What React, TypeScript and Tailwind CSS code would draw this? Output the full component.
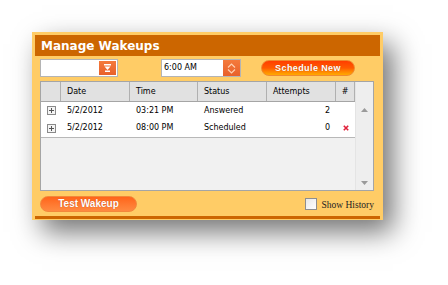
import React from "react";

const cols = "grid grid-cols-[20px_69px_68px_69px_69px_19px]";

const rows = [
  { date: "5/2/2012", time: "03:21 PM", status: "Answered", attempts: 2, del: false },
  { date: "5/2/2012", time: "08:00 PM", status: "Scheduled", attempts: 0, del: true },
];

const PlusBox = () => (
  <svg width="9" height="9" viewBox="0 0 9 9">
    <rect x="0.5" y="0.5" width="8" height="8" fill="#f4f4f4" stroke="#8a8a8a" />
    <path d="M2 4.5h5M4.5 2v5" stroke="#555" strokeWidth="1" />
  </svg>
);

const App: React.FC = () => {
  return (
    <div className="w-[448px] h-[285px] bg-white pt-[32px] pl-[32px] font-['DejaVu_Sans',sans-serif]">
      <div className="w-[351px] h-[188px] bg-[#ffcc66] px-[3px] pt-[3px] shadow-[10px_12px_26px_rgba(0,0,0,0.55)] flex flex-col">
        <div className="h-[21px] bg-[#cc6600] pl-[6px] flex items-center text-white font-bold text-[12px] leading-none">
          Manage Wakeups
        </div>

        <div className="px-[5px] flex flex-col">
          <div className="mt-[3px] h-[18px] flex items-center">
            <div className="w-[78px] h-[18px] bg-white border border-[#b4b4b4] flex items-center justify-end pr-[1px]">
              <div className="w-[17px] h-[14px] bg-gradient-to-b from-[#f47a3c] to-[#e8602a] flex items-center justify-center">
                <svg width="9" height="8" viewBox="0 0 9 8">
                  <rect x="1" y="0" width="7" height="1.5" fill="#fff" />
                  <path d="M1.5 2.5h6L4.5 6z" fill="#fff" />
                  <rect x="2" y="6.5" width="5" height="1.5" fill="#fff" />
                </svg>
              </div>
            </div>

            <div className="ml-[43px] w-[80px] h-[18px] bg-white border border-[#b4b4b4] flex items-center">
              <span className="pl-[2px] text-[8px] text-black flex-1">6:00 AM</span>
              <div className="w-[17px] h-[16px] bg-gradient-to-b from-[#f47a3c] to-[#e8602a] flex items-center justify-center">
                <svg width="11" height="13" viewBox="0 0 11 13">
                  <path d="M2 5.5l3.5-3.5 3.5 3.5M2 7.5l3.5 3.5 3.5-3.5" fill="none" stroke="#ffd0b0" strokeWidth="1.2" />
                </svg>
              </div>
            </div>

            <button className="ml-[20px] w-[94px] h-[16px] rounded-full bg-gradient-to-b from-[#ff3c00] via-[#ff5a00] to-[#ffaa00] border border-[#f08a30] text-white font-['Liberation_Sans',sans-serif] font-bold text-[9px] tracking-[0.4px] leading-none [text-shadow:0_0_1px_rgba(150,40,0,0.6)]">
              Schedule New
            </button>
          </div>

          <div className="mt-[4px] w-[334px] h-[110px] border border-[#a5a5a5] bg-[#f1f1f1] flex text-[8px] text-black">
            <div className="w-[314px] flex flex-col">
              <div className={`${cols} h-[20px] bg-[#e1e1e1] border-b border-[#a5a5a5]`}>
                <div className="border-r border-[#b0b0b0]" />
                <div className="border-r border-[#b0b0b0] pl-[6px] flex items-center">Date</div>
                <div className="border-r border-[#b0b0b0] pl-[6px] flex items-center">Time</div>
                <div className="border-r border-[#b0b0b0] pl-[6px] flex items-center">Status</div>
                <div className="border-r border-[#b0b0b0] pl-[6px] flex items-center">Attempts</div>
                <div className="border-r border-[#b0b0b0] flex items-center justify-center">#</div>
              </div>
              <div className="bg-white border-b border-[#b8b8b8]">
                {rows.map((r, i) => (
                  <div key={i} className={`${cols} h-[17.5px] items-center`}>
                    <div className="flex justify-center">
                      <PlusBox />
                    </div>
                    <div className="pl-[6px]">{r.date}</div>
                    <div className="pl-[6px]">{r.time}</div>
                    <div className="pl-[6px]">{r.status}</div>
                    <div className="text-right pr-[6px]">{r.attempts}</div>
                    <div className="flex justify-center">
                      {r.del && (
                        <svg width="6" height="6" viewBox="0 0 6 6">
                          <path d="M0.8 0.8l4.4 4.4M5.2 0.8L0.8 5.2" stroke="#e0203a" strokeWidth="1.6" />
                        </svg>
                      )}
                    </div>
                  </div>
                ))}
              </div>
            </div>
            <div className="w-[18px] bg-[#eeeeee] border-l border-[#e4e4e4] flex flex-col items-center justify-between pt-[26px] pb-[5px]">
              <svg width="7" height="4" viewBox="0 0 7 4">
                <path d="M0 4L3.5 0 7 4z" fill="#9a9a9a" />
              </svg>
              <svg width="7" height="4" viewBox="0 0 7 4">
                <path d="M0 0h7L3.5 4z" fill="#9a9a9a" />
              </svg>
            </div>
          </div>

          <div className="mt-[5px] h-[16px] flex items-center">
            <button className="w-[97px] h-[16px] rounded-full bg-gradient-to-b from-[#ff6418] to-[#ff8a40] border border-[#f2883c] text-white font-['Liberation_Sans',sans-serif] font-bold text-[10px] leading-none [text-shadow:0_0_1px_rgba(150,40,0,0.6)]">
              Test Wakeup
            </button>
            <div className="ml-auto flex items-center gap-[4px] pr-[1px]">
              <div className="w-[12px] h-[12px] border border-[#8e8e8e] bg-gradient-to-br from-[#e8e8e8] to-white" />
              <span className="font-['Liberation_Serif',serif] text-[9.5px] text-[#222] leading-none pt-[4px]">
                Show History
              </span>
            </div>
          </div>
        </div>

        <div className="mt-[4px] h-[3px] bg-[#cc6600]" />
      </div>
    </div>
  );
};

export default App;
